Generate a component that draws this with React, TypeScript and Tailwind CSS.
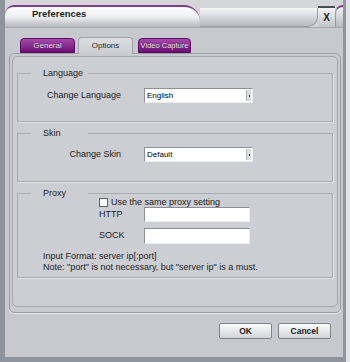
import React from "react"

const FONT = "font-['Liberation_Sans',Arial,sans-serif]"

function Select({ value }: { value: string }) {
  return (
    <div className="w-[109px] h-[15px] flex bg-white border border-[#8f9197] border-b-[#eceded] border-r-[#eceded]">
      <span className="flex-1 pl-[2px] text-[8px] leading-[13px] text-black">{value}</span>
      <span className="w-[5px] my-[1px] mr-[1px] bg-[#dcdde0] border-l border-[#b3b5ba] flex items-center justify-center">
        <span className="w-[1px] h-[2px] bg-[#333]" />
      </span>
    </div>
  )
}

function TextInput({ h }: { h: string }) {
  return <div className={`w-[106px] ${h} bg-white border border-[#8c8e94] border-b-[#eceded] border-r-[#eceded]`} />
}

function Group({ title, className, children }: { title: string; className: string; children: React.ReactNode }) {
  return (
    <fieldset className={`border border-[#a8aaaf] shadow-[1px_1px_0_#e2e3e6] ${className}`}>
      <legend className="ml-[13px] w-[57px] pl-[12px] text-[9px] leading-[12px] text-[#222]">{title}</legend>
      {children}
    </fieldset>
  )
}

export default function App() {
  return (
    <div className={`w-[350px] h-[362px] bg-[#e3e4e7] ${FONT}`}>
      <div className="w-[346px] h-[362px] flex flex-col bg-[#c8c9ce] border-l-[5px] border-r-[3px] border-b-[5px] border-[#8f949c]">
        {/* title bar */}
        <div className="h-[28px] flex items-end bg-[#d4d5d9] border-b border-[#a7a9ae]">
          <div className="w-[195px] h-[22px] rounded-tl-[9px] rounded-tr-[16px] border-t-2 border-[#7e3d86] bg-linear-to-b from-white via-[#eeeff1] to-[#b5b7bd] pl-[27px] pt-[1px] flex items-start">
            <span className="text-[9.5px] leading-[12px] font-bold text-[#1e1e1e]">Preferences</span>
          </div>
          <div className="w-[118px] h-[19px] rounded-br-[10px] bg-linear-to-b from-[#f7f7f8] to-[#b7b9bf] border-r border-b border-[#9a9ca2]" />
          <div className="w-[17px] h-[21px] border-t-2 border-[#4a4a50] bg-linear-to-b from-[#f4f4f5] to-[#c2c4c9] flex items-center justify-center text-[10px] leading-none font-bold text-[#222]">
            X
          </div>
          <div className="flex-1 h-[22px] rounded-tl-[8px] border-t-2 border-l border-[#7e3d86] border-l-[#9a9ca2] bg-linear-to-b from-[#f4f4f5] to-[#b7b9bf]" />
        </div>

        {/* tabs */}
        <div className="mt-[10px] ml-[15px] h-[15px] flex items-end">
          <div className="w-[55px] h-[15px] rounded-t-[4px] border border-[#5b0c62] bg-linear-to-b from-[#a54aab] to-[#6c0e74] text-[8px] leading-[13px] text-center whitespace-nowrap text-[#ece0ee] [text-shadow:0_0_1px_#3a0040]">
            General
          </div>
          <div className="relative z-10 ml-[3px] w-[55px] h-[17px] -mb-[1px] rounded-t-[4px] border border-b-0 border-[#9fa1a7] bg-linear-to-b from-[#dedfe3] to-[#cbccd1] text-[8px] leading-[15px] text-center whitespace-nowrap text-[#2a2a2a]">
            Options
          </div>
          <div className="ml-[5px] w-[53px] h-[15px] rounded-t-[4px] border border-[#5b0c62] bg-linear-to-b from-[#a54aab] to-[#6c0e74] text-[7.5px] leading-[13px] text-center whitespace-nowrap text-[#f2e8f3] [text-shadow:0_0_1px_#3a0040]">
            Video Capture
          </div>
        </div>

        {/* panel */}
        <div className="ml-[4px] w-[332px] h-[260px] border border-[#9c9ea4] rounded-[5px] bg-[#c9cacf] p-[2px] shadow-[0_1px_0_#e6e7ea]">
          <div className="h-[251px] border border-[#a5a7ad] rounded-[5px] bg-[#cdced3] px-[4px] pt-[10px]">
            <Group title="Language" className="h-[55px]">
              <div className="mt-[9px] flex items-center">
                <span className="w-[103px] text-right text-[9px] leading-[15px] text-[#222]">Change Language</span>
                <div className="ml-[23px]">
                  <Select value="English" />
                </div>
              </div>
            </Group>

            <Group title="Skin" className="mt-[5px] h-[55px]">
              <div className="mt-[8px] flex items-center">
                <span className="w-[103px] text-right text-[9px] leading-[15px] text-[#222]">Change Skin</span>
                <div className="ml-[23px]">
                  <Select value="Default" />
                </div>
              </div>
            </Group>

            <Group title="Proxy" className="mt-[5px] h-[91px]">
              <div className="-mt-[2px] ml-[81px] h-[10px] flex items-center">
                <span className="w-[9px] h-[9px] border border-[#5f6167] bg-white" />
                <span className="ml-[3px] text-[9px] leading-[10px] text-[#222]">Use the same proxy setting</span>
              </div>
              <div className="ml-[81px] h-[15px] flex items-center">
                <span className="w-[45px] text-[9px] text-[#222]">HTTP</span>
                <TextInput h="h-[15px]" />
              </div>
              <div className="mt-[6px] ml-[81px] h-[16px] flex items-center">
                <span className="w-[45px] text-[9px] text-[#222]">SOCK</span>
                <TextInput h="h-[16px]" />
              </div>
              <div className="mt-[7px] ml-[25px] text-[9px] leading-[11px] text-[#222]">
                <p>Input Format: server ip[:port]</p>
                <p>Note: "port" is not necessary, but "server ip" is a must.</p>
              </div>
            </Group>
          </div>
        </div>

        {/* buttons */}
        <div className="mt-[10px] pr-[12px] flex justify-end gap-[6px]">
          <button className="w-[53px] h-[16px] border border-[#7f838b] rounded-[2px] bg-linear-to-b from-[#fbfbfc] to-[#d3d4da] text-[8.5px] leading-none font-bold text-[#222]">
            OK
          </button>
          <button className="w-[53px] h-[16px] border border-[#7f838b] rounded-[2px] bg-linear-to-b from-[#fbfbfc] to-[#d3d4da] text-[8.5px] leading-none font-bold text-[#222]">
            Cancel
          </button>
        </div>
      </div>
    </div>
  )
}
